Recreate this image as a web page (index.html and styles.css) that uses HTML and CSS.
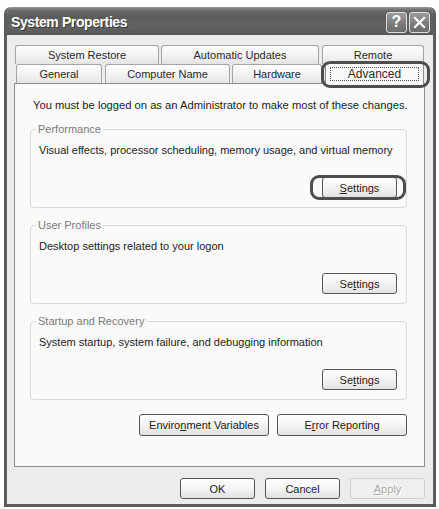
FILE: index.html
```html
<!DOCTYPE html>
<html>
<head>
<meta charset="utf-8">
<link rel="stylesheet" href="styles.css">
</head>
<body>
<div class="window">
  <div class="titlebar">
    <span class="title">System Properties</span>
    <div class="caption-btns">
      <span class="cbtn help">?</span>
      <span class="cbtn close"><svg width="13" height="13" viewBox="0 0 13 13"><path d="M2 2 L11 11 M11 2 L2 11" stroke="#fff" stroke-width="2.2" stroke-linecap="square" fill="none"/></svg></span>
    </div>
  </div>
  <div class="client">
    <div class="tabs">
      <div class="tabrow back">
        <div class="tab t-restore">System Restore</div>
        <div class="tab t-updates">Automatic Updates</div>
        <div class="tab t-remote">Remote</div>
      </div>
      <div class="tabrow front">
        <div class="tab t-general">General</div>
        <div class="tab t-name">Computer Name</div>
        <div class="tab t-hardware">Hardware</div>
        <div class="tab t-advanced selected"><span class="focus">Advanced</span><span class="ring ring-tab"></span></div>
      </div>
    </div>
    <div class="panel">
      <p class="note">You must be logged on as an Administrator to make most of these changes.</p>
      <fieldset class="group">
        <legend>Performance</legend>
        <p class="desc">Visual effects, processor scheduling, memory usage, and virtual memory</p>
        <div class="btnrow"><span class="btn settings"><u>S</u>ettings<span class="ring ring-btn"></span></span></div>
      </fieldset>
      <fieldset class="group">
        <legend>User Profiles</legend>
        <p class="desc">Desktop settings related to your logon</p>
        <div class="btnrow"><span class="btn settings">Se<u>t</u>tings</span></div>
      </fieldset>
      <fieldset class="group">
        <legend>Startup and Recovery</legend>
        <p class="desc">System startup, system failure, and debugging information</p>
        <div class="btnrow"><span class="btn settings">Se<u>t</u>tings</span></div>
      </fieldset>
      <div class="btnrow env-row">
        <span class="btn wide">Enviro<u>n</u>ment Variables</span>
        <span class="btn wide">E<u>r</u>ror Reporting</span>
      </div>
    </div>
    <div class="btnrow dialog-row">
      <span class="btn dlg">OK</span>
      <span class="btn dlg">Cancel</span>
      <span class="btn dlg disabled"><u>A</u>pply</span>
    </div>
  </div>
</div>
</body>
</html>
```
FILE: styles.css
```css
html, body {
  margin: 0;
  padding: 0;
  background: #ffffff;
}
body {
  font-family: "Liberation Sans", Arial, sans-serif;
  font-size: 11px;
  color: #222;
}
.window {
  box-sizing: border-box;
  width: 432px;
  height: 500px;
  margin: 7px 0 0 4px;
  background: #ececec;
  border: 3px solid #5c5c5c;
  border-top: 0;
  border-radius: 7px 7px 0 0;
  display: flex;
  flex-direction: column;
  overflow: hidden;
}
.titlebar {
  height: 28px;
  flex: none;
  margin: 0 -3px;
  padding: 0 6px 0 7px;
  background: linear-gradient(#9a9a9a 0px, #6e6e6e 3px, #5c5c5c 9px, #626262 20px, #585858 28px);
  display: flex;
  align-items: center;
  justify-content: space-between;
}
.title {
  color: #fff;
  font-weight: bold;
  font-size: 14px;
  letter-spacing: -0.4px;
  text-shadow: 1px 1px 0 #3a3a3a;
  margin-top: 1px;
}
.caption-btns {
  display: flex;
  gap: 2px;
  margin-top: 2px;
}
.cbtn {
  box-sizing: border-box;
  width: 21px;
  height: 21px;
  border: 1px solid #e0e0e0;
  border-radius: 3px;
  background: linear-gradient(#9c9c9c, #7a7a7a 60%, #6c6c6c);
  display: flex;
  align-items: center;
  justify-content: center;
  color: #fff;
}
.help {
  font-weight: bold;
  font-size: 16px;
  line-height: 1;
}
.client {
  flex: 1;
  display: flex;
  flex-direction: column;
  padding: 10px 8px 0 7px;
}
.tabs {
  display: flex;
  flex-direction: column;
  position: relative;
  z-index: 2;
}
.tabrow {
  display: flex;
  height: 19px;
}
.tabrow.back {
  padding-left: 1px;
  gap: 2px;
}
.tabrow.front {
  padding-left: 2px;
  gap: 3px;
}
.tab {
  box-sizing: border-box;
  height: 19px;
  border: 1px solid #a4a4a4;
  border-bottom: 0;
  border-radius: 3px 3px 0 0;
  background: linear-gradient(#fdfdfd, #f1f1f1 60%, #e4e4e4);
  display: flex;
  align-items: center;
  justify-content: center;
  color: #2a2a2a;
}
.t-restore { width: 144px; }
.t-updates { width: 158px; }
.t-remote { width: 102px; margin-left: 1px; }
.t-general { width: 86px; }
.t-name { width: 125px; }
.t-hardware { width: 90px; margin-left: -1px; }
.t-advanced { width: 99px; }
.tab.selected {
  position: relative;
  height: 22px;
  margin-top: -2px;
  background: #fafafa;
  border-color: #8a8a8a;
  border-top: 2px solid #6a6a6a;
}
.focus {
  box-sizing: border-box;
  width: 89px;
  height: 14px;
  line-height: 12px;
  text-align: center;
  border: 1px dotted #555;
  margin-top: -1px;
  font-size: 12px;
}
.ring {
  position: absolute;
  border: 3px solid #4e4e4e;
  border-radius: 9px;
  pointer-events: none;
}
.ring-tab {
  left: -5px;
  right: -7px;
  top: -3px;
  bottom: -4px;
}
.ring-btn {
  left: -13px;
  right: -10px;
  top: -3px;
  bottom: -3px;
}
.panel {
  box-sizing: border-box;
  height: 384px;
  flex: none;
  background: #fafafa;
  border: 1px solid #8f8f8f;
  padding: 0 17px 0 15px;
  display: flex;
  flex-direction: column;
  position: relative;
  z-index: 1;
}
.note {
  margin: 14px 0 10px 3px;
  line-height: 14px;
  white-space: nowrap;
  font-size: 11.2px;
}
.group {
  margin: 0 0 10px 0;
  border: 1px solid #d9d9d9;
  border-radius: 4px;
  padding: 0 9px 9px 8px;
  min-width: 0;
}
.group legend {
  color: #7a7a7a;
  padding: 0 2px;
  margin-left: -3px;
  line-height: 14px;
}
.desc {
  margin: 7px 0 0 0;
  line-height: 14px;
  white-space: nowrap;
}
.btnrow {
  display: flex;
  justify-content: flex-end;
}
.group .btnrow {
  margin-top: 20px;
}
.btn {
  box-sizing: border-box;
  height: 21px;
  border: 1px solid #555;
  border-radius: 3px;
  background: linear-gradient(#ffffff, #f4f4f4 50%, #e2e2e2);
  display: flex;
  align-items: center;
  justify-content: center;
  color: #222;
  position: relative;
}
.settings { width: 75px; }
.env-row {
  gap: 8px;
  margin-top: 4px;
}
.wide {
  height: 22px;
  width: 130px;
}
.dialog-row {
  gap: 10px;
  margin-top: 11px;
}
.dlg { width: 75px; }
.disabled {
  border-color: #cfcfcf;
  color: #ababab;
  text-shadow: 1px 1px 0 #fff;
  background: #efefef;
}
```
